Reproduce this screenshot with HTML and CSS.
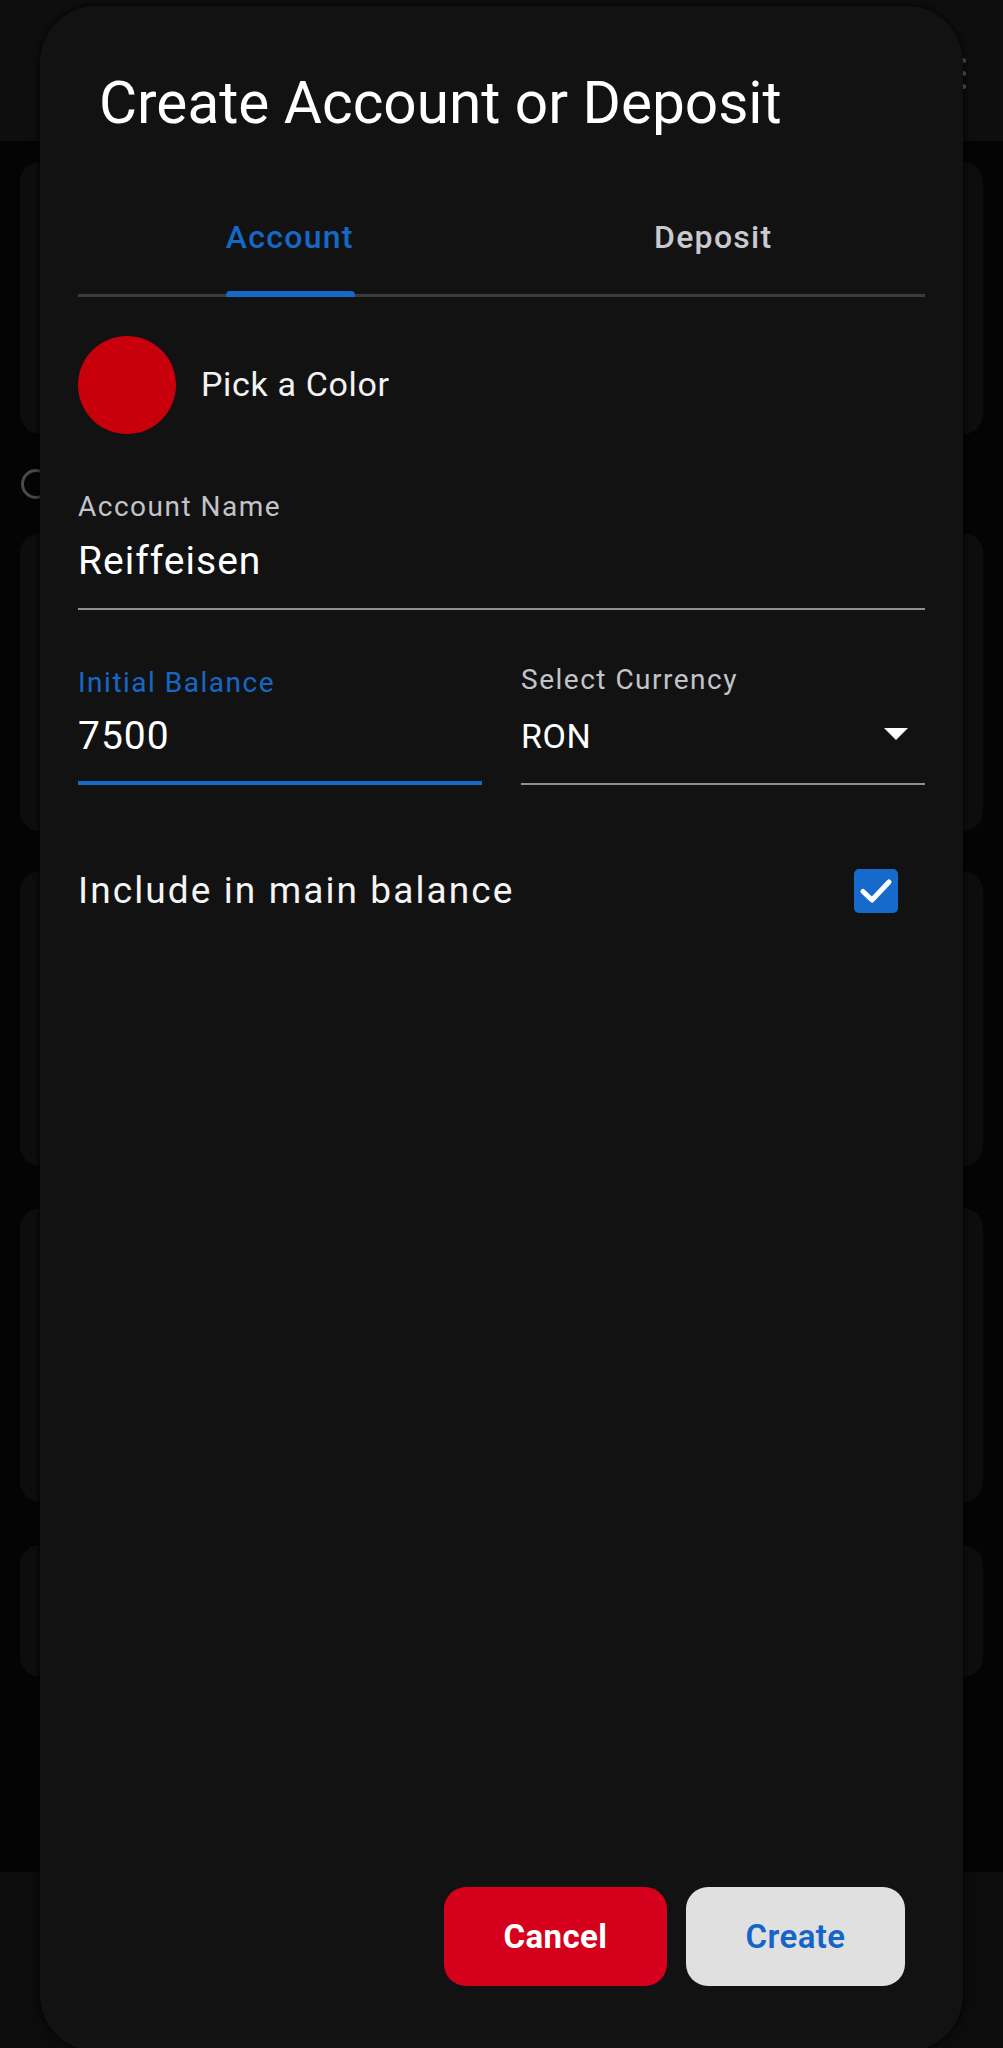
FILE: index.html
```html
<!DOCTYPE html>
<html lang="en">
<head>
<meta charset="utf-8">
<title>Create Account or Deposit</title>
<link rel="stylesheet" href="styles.css">
</head>
<body>
<div class="app">
  <header class="appbar">
    <span class="menu"><i></i><i></i><i></i></span>
  </header>
  <main class="feed">
    <div class="card c1"></div>
    <div class="info-row"><span class="info-icon"></span></div>
    <div class="card c2"></div>
    <div class="card c3"></div>
    <div class="card c4"></div>
    <div class="card c5"></div>
  </main>
  <nav class="bottomnav"></nav>
</div>

<section class="dialog">
  <h1 class="title">Create Account or Deposit</h1>

  <div class="tabs">
    <div class="tab active"><span class="tab-label">Account<i class="indicator"></i></span></div>
    <div class="tab"><span class="tab-label">Deposit</span></div>
  </div>

  <div class="color-row">
    <span class="swatch"></span>
    <span class="color-text">Pick a Color</span>
  </div>

  <div class="field name-field">
    <div class="label">Account Name</div>
    <div class="value">Reiffeisen</div>
  </div>

  <div class="field-row">
    <div class="field focused">
      <div class="label">Initial Balance</div>
      <div class="value">7500</div>
    </div>
    <div class="field select">
      <div class="label">Select Currency</div>
      <div class="value"><span class="ron">RON</span><span class="arrow"></span></div>
    </div>
  </div>

  <div class="check-row">
    <span class="check-text">Include in main balance</span>
    <span class="checkbox">
      <svg width="44" height="44" viewBox="0 0 44 44"><rect x="0" y="0" width="44" height="44" rx="5" fill="#166acb"/><polyline points="9,22.5 18,31 35,13" fill="none" stroke="#fff" stroke-width="5" stroke-linecap="round" stroke-linejoin="round"/></svg>
    </span>
  </div>

  <div class="actions">
    <button class="btn cancel">Cancel</button>
    <button class="btn create">Create</button>
  </div>
</section>
</body>
</html>
```

FILE: styles.css
```css
* { box-sizing: border-box; }
html, body {
  margin: 0;
  padding: 0;
}
body {
  width: 1003px;
  height: 2048px;
  overflow: hidden;
  background: #040404;
  font-family: Roboto, "Noto Sans", sans-serif;
  position: relative;
}

/* background app (dimmed) */
.app {
  display: flex;
  flex-direction: column;
  height: 2048px;
}
.appbar {
  height: 141px;
  background: #0e0e0e;
  display: flex;
  justify-content: flex-end;
  align-items: flex-start;
  padding: 58px 37px 0 0;
}
.menu {
  display: flex;
  flex-direction: column;
  gap: 8px;
}
.menu i {
  display: block;
  width: 5px;
  height: 5px;
  border-radius: 50%;
  background: #5c5c5c;
}
.feed {
  height: 1731px;
  overflow: hidden;
  padding: 21px 20px 0 20px;
  display: flex;
  flex-direction: column;
}
.card {
  background: #0d0d0d;
  border-radius: 20px;
  flex: none;
}
.c1 { height: 272px; }
.c2 { height: 298px; }
.c3 { height: 295px; margin-top: 40px; }
.c4 { height: 294px; margin-top: 42px; }
.c5 { height: 132px; margin-top: 43px; }
.info-row {
  height: 99px;
  display: flex;
  align-items: center;
  flex: none;
}
.info-icon {
  width: 30px;
  height: 30px;
  border: 3px solid #4a4a4a;
  border-radius: 50%;
  margin-left: 1px;
}
.bottomnav {
  flex: 1;
  background: #0c0c0c;
}

/* dialog */
.dialog {
  position: absolute;
  left: 40px;
  top: 6px;
  width: 923px;
  height: 2045px;
  background: #121212;
  border-radius: 56px;
  box-shadow: 0 0 6px 1px rgba(0, 0, 0, 0.7);
  padding: 63px 38px 65px 38px;
  display: flex;
  flex-direction: column;
  color: #fff;
}
.title {
  margin: 0 0 0 21px;
  font-size: 58.5px;
  font-weight: 400;
  line-height: 1.172;
  color: #ffffff;
}

.tabs {
  display: grid;
  grid-template-columns: 1fr 1fr;
  box-shadow: inset 0 -3px 0 #3a3a3f;
  padding-top: 81px;
}
.tab {
  display: flex;
  justify-content: center;
  align-items: flex-end;
}
.tab-label {
  display: flex;
  flex-direction: column;
  font-size: 32px;
  font-weight: 500;
  line-height: 1.172;
  letter-spacing: 1.3px;
  color: #c9c9d0;
  padding-bottom: 41px;
}
.tab.active .tab-label {
  color: #1668c7;
  padding-bottom: 0;
}
.indicator {
  display: block;
  height: 6px;
  margin-top: 35px;
  margin-right: -1.3px;
  background: #1668c7;
  border-radius: 4px 4px 0 0;
}

.color-row {
  margin-top: 39px;
  display: flex;
  align-items: center;
  gap: 25px;
}
.swatch {
  width: 98px;
  height: 98px;
  border-radius: 50%;
  background: #c8000b;
}
.color-text {
  font-size: 34px;
  line-height: 1.172;
  color: #f2f2f2;
  letter-spacing: 0.65px;
}

.field {
  display: flex;
  flex-direction: column;
  border-bottom: 2px solid #8f8f94;
}
.label {
  font-size: 28px;
  line-height: 1.172;
  color: #c3c3ca;
  letter-spacing: 1.5px;
}
.value {
  font-size: 39px;
  line-height: 46px;
  color: #ffffff;
  letter-spacing: 1px;
  margin-top: 13px;
  padding-bottom: 22px;
}
.name-field {
  margin-top: 57px;
}
.name-field .value {
  margin-top: 14px;
  padding-bottom: 24px;
}
.field-row {
  margin-top: 54px;
  display: grid;
  grid-template-columns: 1fr 1fr;
  column-gap: 39px;
  align-items: end;
}
.field.focused {
  border-bottom: 4px solid #1668c7;
}
.field.focused .label {
  color: #1668c7;
}
.select .value {
  display: flex;
  align-items: center;
  justify-content: space-between;
  padding-bottom: 24px;
}
.ron {
  font-size: 34px;
  letter-spacing: 0.6px;
  padding-top: 3px;
}
.arrow {
  width: 0;
  height: 0;
  border-left: 12px solid transparent;
  border-right: 12px solid transparent;
  border-top: 12px solid #ffffff;
  margin-right: 17px;
}

.check-row {
  margin-top: 84px;
  display: flex;
  align-items: center;
  justify-content: space-between;
  padding-right: 27px;
}
.check-text {
  font-size: 37px;
  line-height: 1.172;
  color: #f4f4f4;
  letter-spacing: 2.1px;
}
.checkbox {
  width: 44px;
  height: 44px;
  display: block;
}
.checkbox svg { display: block; }

.actions {
  margin-top: auto;
  display: flex;
  justify-content: flex-end;
  gap: 19px;
  padding-right: 20px;
}
.btn {
  height: 99px;
  border: none;
  border-radius: 22px;
  font-family: Roboto, "Noto Sans", sans-serif;
  font-size: 33px;
  font-weight: 700;
  letter-spacing: 0.4px;
  padding: 0;
}
.cancel {
  width: 223px;
  background: #d5001c;
  color: #ffffff;
}
.create {
  width: 219px;
  background: #e0e0e0;
  color: #1565c8;
  font-weight: 600;
}
```
